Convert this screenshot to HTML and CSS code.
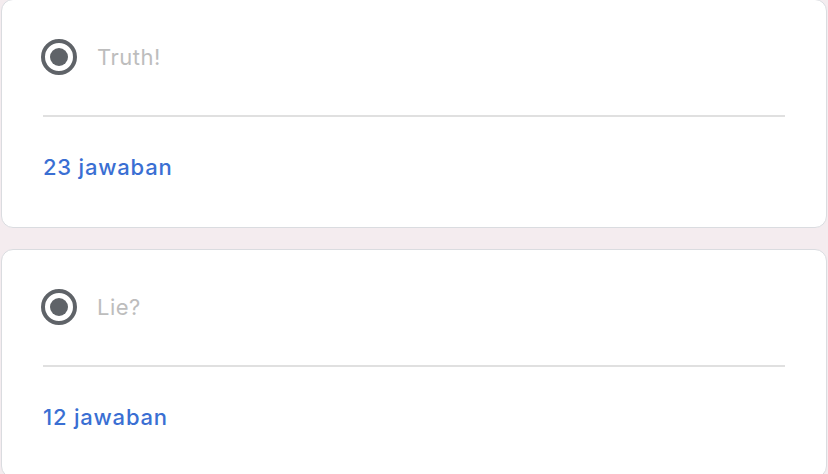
FILE: index.html
```html
<!DOCTYPE html>
<html>
<head>
<meta charset="utf-8">
<link rel="stylesheet" href="styles.css">
</head>
<body>
<div class="page">
  <div class="card first">
    <div class="option">
      <svg class="radio" width="36" height="36" viewBox="0 0 36 36"><circle cx="18" cy="18" r="16" fill="none" stroke="#5f6368" stroke-width="4"/><circle cx="18" cy="18" r="9" fill="#5f6368"/></svg>
      <span class="label">Truth!</span>
    </div>
    <div class="divider"></div>
    <div class="count">23 jawaban</div>
  </div>
  <div class="card">
    <div class="option">
      <svg class="radio" width="36" height="36" viewBox="0 0 36 36"><circle cx="18" cy="18" r="16" fill="none" stroke="#5f6368" stroke-width="4"/><circle cx="18" cy="18" r="9" fill="#5f6368"/></svg>
      <span class="label">Lie?</span>
    </div>
    <div class="divider"></div>
    <div class="count">12 jawaban</div>
  </div>
</div>
</body>
</html>
```
FILE: styles.css
```css
html, body {
  margin: 0;
  padding: 0;
  background: #f4ecef;
  overflow: hidden;
}
.page {
  display: flex;
  flex-direction: column;
  gap: 21px;
  padding: 0 1px;
  margin-top: -1px;
  font-family: Inter, Roboto, sans-serif;
}
.card {
  background: #fff;
  border: 1px solid #dadce0;
  border-radius: 12px;
  padding: 39px 41px 45px 40px;
}
.option {
  display: flex;
  align-items: center;
  gap: 20px;
  height: 36px;
}
.radio {
  display: block;
  flex: none;
  margin-left: -1px;
}
.label {
  font-size: 22px;
  letter-spacing: 0.5px;
  color: #bdbdbd;
}
.divider {
  height: 2px;
  background: #e0e0e0;
  margin-top: 40px;
  margin-left: 1px;
}
.count {
  margin-top: 35px;
  margin-left: 1px;
  font-size: 22px;
  letter-spacing: 0.8px;
  line-height: 30px;
  font-weight: 500;
  color: #3a6fd3;
}
```
